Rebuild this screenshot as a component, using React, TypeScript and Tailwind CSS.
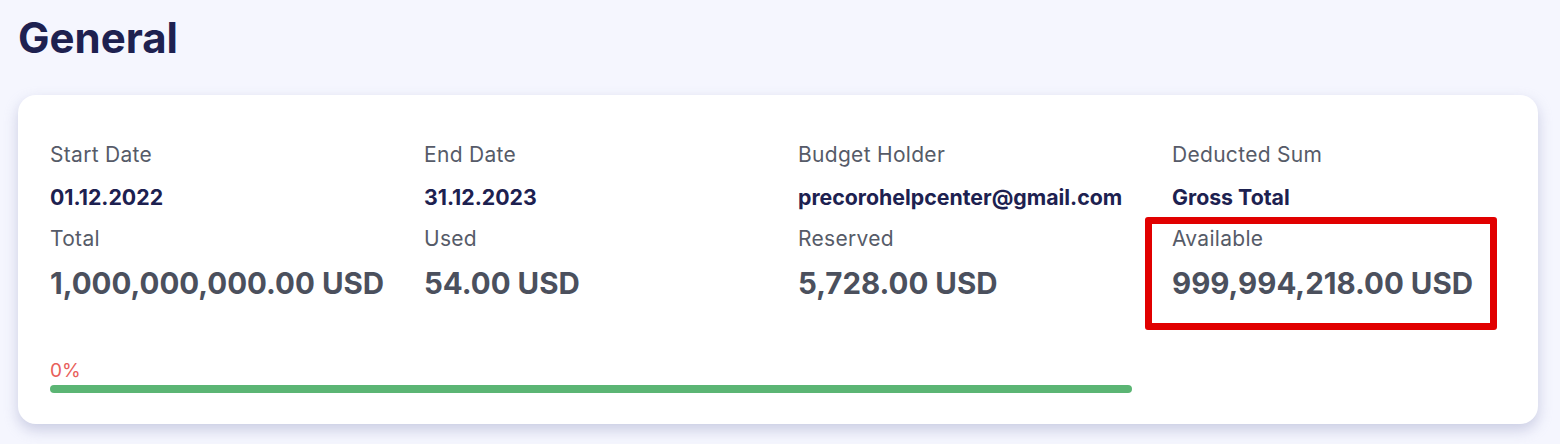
import React from "react";

const Cell = ({
  label,
  value,
  big,
}: {
  label: string;
  value: string;
  big?: boolean;
}) => (
  <div className="flex flex-col whitespace-nowrap">
    <div className="text-[21px] leading-[28px] tracking-[0.3px] text-[#565b68]">{label}</div>
    {big ? (
      <div className="mt-[12px] text-[29.5px] leading-[36px] font-bold text-[#4b505d]">{value}</div>
    ) : (
      <div className="mt-[14px] text-[21.3px] leading-[28px] font-bold text-[#1d2150]">{value}</div>
    )}
  </div>
);

export default function App() {
  const cols = [
    { l1: "Start Date", v1: "01.12.2022", l2: "Total", v2: "1,000,000,000.00 USD" },
    { l1: "End Date", v1: "31.12.2023", l2: "Used", v2: "54.00 USD" },
    { l1: "Budget Holder", v1: "precorohelpcenter@gmail.com", l2: "Reserved", v2: "5,728.00 USD" },
    { l1: "Deducted Sum", v1: "Gross Total", l2: "Available", v2: "999,994,218.00 USD" },
  ];
  return (
    <div
      className="min-h-[444px] w-full bg-[#f5f6fe] px-[18px] pt-[17px]"
      style={{ fontFamily: "Inter, 'Noto Sans', sans-serif" }}
    >
      <h1 className="text-[42px] leading-[42px] font-bold text-[#1e2150]">General</h1>
      <div className="mt-[36px] w-[1520px] rounded-[18px] bg-white px-8 pt-[46px] pb-[31px] shadow-[0_6px_14px_rgba(150,155,195,0.45)]">
        <div className="grid grid-cols-4 gap-x-[40px]">
          {cols.map((c, i) => (
            <div key={i} className="flex min-w-0 flex-col">
              <Cell label={c.l1} value={c.v1} />
              <div className="relative mt-[14px]">
                <Cell label={c.l2} value={c.v2} big />
                {i === 3 && (
                  <div className="absolute left-[-27px] top-[-8px] h-[113px] w-[352px] rounded-[3px] border-[7px] border-[#e10000]" />
                )}
              </div>
            </div>
          ))}
        </div>
        <div className="mt-[60px] grid grid-cols-4 gap-x-[40px]">
          <div className="col-span-3">
            <div className="text-[19px] leading-[20px] text-[#e8605a]">0%</div>
            <div className="mt-[4px] h-[8px] w-full rounded-full bg-[#5bb574]" />
          </div>
        </div>
      </div>
    </div>
  );
}
